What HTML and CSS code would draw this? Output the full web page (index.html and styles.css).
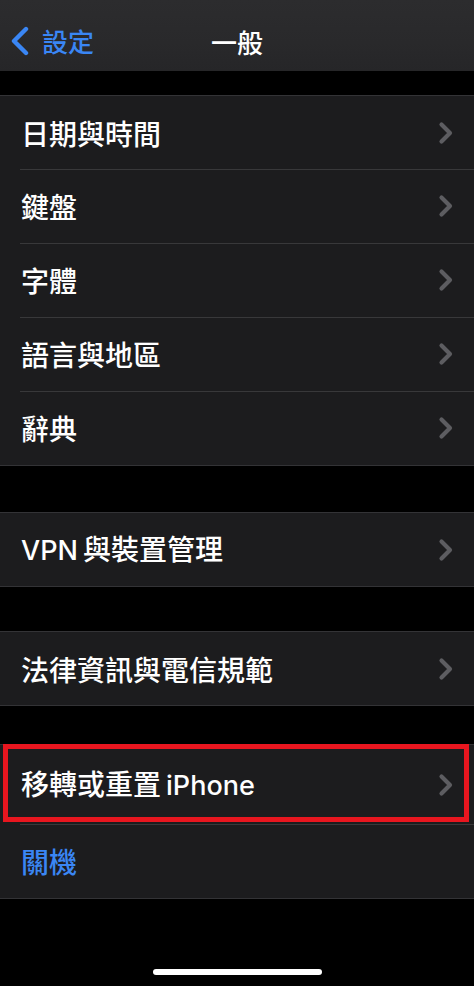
FILE: index.html
```html
<!DOCTYPE html>
<html lang="zh-Hant">
<head>
<meta charset="utf-8">
<title>一般</title>
<link rel="stylesheet" href="styles.css">
</head>
<body>
<div class="screen">
  <header class="nav">
    <div class="back">
      <svg class="back-icon" width="20" height="30" viewBox="0 0 20 30"><path d="M16 3 L4 15 L16 27" fill="none" stroke="#3a86f4" stroke-width="4.4" stroke-linecap="round" stroke-linejoin="round"/></svg>
      <span class="back-label">設定</span>
    </div>
    <div class="title">一般</div>
  </header>

  <section class="group g1">
    <div class="row"><span class="label">日期與時間</span><svg class="chev" width="16" height="24" viewBox="0 0 16 24"><path d="M3.5 3.5 L12 12 L3.5 20.5" fill="none" stroke="#5d5d61" stroke-width="4.2" stroke-linecap="round" stroke-linejoin="round"/></svg></div>
    <div class="row"><span class="label">鍵盤</span><svg class="chev" width="16" height="24" viewBox="0 0 16 24"><path d="M3.5 3.5 L12 12 L3.5 20.5" fill="none" stroke="#5d5d61" stroke-width="4.2" stroke-linecap="round" stroke-linejoin="round"/></svg></div>
    <div class="row"><span class="label">字體</span><svg class="chev" width="16" height="24" viewBox="0 0 16 24"><path d="M3.5 3.5 L12 12 L3.5 20.5" fill="none" stroke="#5d5d61" stroke-width="4.2" stroke-linecap="round" stroke-linejoin="round"/></svg></div>
    <div class="row"><span class="label">語言與地區</span><svg class="chev" width="16" height="24" viewBox="0 0 16 24"><path d="M3.5 3.5 L12 12 L3.5 20.5" fill="none" stroke="#5d5d61" stroke-width="4.2" stroke-linecap="round" stroke-linejoin="round"/></svg></div>
    <div class="row"><span class="label">辭典</span><svg class="chev" width="16" height="24" viewBox="0 0 16 24"><path d="M3.5 3.5 L12 12 L3.5 20.5" fill="none" stroke="#5d5d61" stroke-width="4.2" stroke-linecap="round" stroke-linejoin="round"/></svg></div>
  </section>

  <section class="group g2">
    <div class="row"><span class="label"><span class="latin">VPN</span><span class="thin-gap"></span>與裝置管理</span><svg class="chev" width="16" height="24" viewBox="0 0 16 24"><path d="M3.5 3.5 L12 12 L3.5 20.5" fill="none" stroke="#5d5d61" stroke-width="4.2" stroke-linecap="round" stroke-linejoin="round"/></svg></div>
  </section>

  <section class="group g3">
    <div class="row"><span class="label">法律資訊與電信規範</span><svg class="chev" width="16" height="24" viewBox="0 0 16 24"><path d="M3.5 3.5 L12 12 L3.5 20.5" fill="none" stroke="#5d5d61" stroke-width="4.2" stroke-linecap="round" stroke-linejoin="round"/></svg></div>
  </section>

  <section class="group g4">
    <div class="row row-reset"><span class="label">移轉或重置<span class="thin-gap"></span><span class="latin">iPhone</span></span><svg class="chev" width="16" height="24" viewBox="0 0 16 24"><path d="M3.5 3.5 L12 12 L3.5 20.5" fill="none" stroke="#5d5d61" stroke-width="4.2" stroke-linecap="round" stroke-linejoin="round"/></svg><div class="highlight"></div></div>
    <div class="row"><span class="label blue">關機</span></div>
  </section>

  <div class="home-area"><div class="home-bar"></div></div>
</div>
</body>
</html>
```

FILE: styles.css
```css
* { box-sizing: border-box; }
html, body {
  margin: 0;
  padding: 0;
  background: #000;
}
body {
  font-family: "Noto Sans CJK TC", "Noto Sans CJK SC", sans-serif;
  color: #fff;
  width: 474px;
  height: 986px;
  overflow: hidden;
}
.screen {
  display: flex;
  flex-direction: column;
  height: 986px;
}
.nav {
  height: 71px;
  background: linear-gradient(180deg, #2c2c2e 0%, #29292b 60%, #262628 100%);
  display: flex;
  align-items: center;
  justify-content: center;
  position: relative;
  flex-shrink: 0;
}
.back {
  position: absolute;
  left: 10px;
  top: 26px;
  display: flex;
  align-items: center;
  gap: 12px;
}
.back-icon { display: block; }
.back-label {
  color: #3a86f4;
  font-size: 26px;
  font-weight: 500;
  line-height: 30px;
}
.title {
  font-size: 26px;
  font-weight: 500;
  line-height: 30px;
  margin-top: 12px;
}
.group {
  background: #1c1c1e;
  border-top: 1px solid #333336;
  border-bottom: 1px solid #333336;
  flex-shrink: 0;
}
.g1 { margin-top: 24px; }
.g2 { margin-top: 46px; }
.g3 { margin-top: 44px; }
.g4 { margin-top: 38px; }
.row {
  height: 73px;
  display: flex;
  align-items: center;
  justify-content: space-between;
  padding: 0 20px 0 21px;
  position: relative;
}
.row + .row {
  height: 74px;
}
.row + .row::before {
  content: "";
  position: absolute;
  left: 20px;
  right: 0;
  top: 0;
  height: 1px;
  background: #38383a;
}
.label {
  font-size: 28px;
  font-weight: 500;
  line-height: 34px;
  display: flex;
  align-items: baseline;
}
.thin-gap {
  display: inline-block;
  width: 5px;
}
.latin {
  font-family: "Inter", "Noto Sans", sans-serif;
  font-weight: 500;
  font-size: 27px;
}
.blue { color: #3a86f4; }
.chev {
  display: block;
}
.row-reset { height: 79px; }
.highlight {
  position: absolute;
  left: 3px;
  top: -1px;
  width: 466px;
  height: 78px;
  border: 5px solid #e8161f;
  pointer-events: none;
}
.home-area {
  flex: 1;
  display: flex;
  justify-content: center;
  align-items: flex-end;
  padding-bottom: 11px;
}
.home-bar {
  width: 169px;
  height: 6px;
  border-radius: 3px;
  background: #fff;
}
```
